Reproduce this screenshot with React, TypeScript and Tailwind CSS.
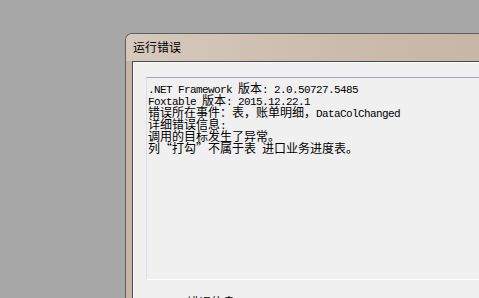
import React from 'react';

const lines = [
  '.NET Framework 版本: 2.0.50727.5485',
  'Foxtable 版本: 2015.12.22.1',
  '错误所在事件：表，账单明细，DataColChanged',
  '详细错误信息:',
  '调用的目标发生了异常。',
  '列“打勾”不属于表 进口业务进度表。',
];

// ascii runs get the narrow mono face, everything else the CJK face
const Line: React.FC<{ text: string }> = ({ text }) => {
  const parts = text.split(/([\x20-\x7E]+)/).filter((p) => p.length > 0);
  return (
    <div className="h-[12px] leading-[12px] whitespace-pre">
      {parts.map((p, i) =>
        /^[\x20-\x7E]+$/.test(p) ? (
          <span
            key={i}
            className="font-['Liberation_Mono',monospace] text-[11px] tracking-[-0.6px]"
          >
            {p}
          </span>
        ) : (
          <span key={i} className="font-['Noto_Sans_CJK_SC',sans-serif] text-[12px]">
            {p}
          </span>
        )
      )}
    </div>
  );
};

export default function App() {
  return (
    <div className="w-[479px] h-[298px] overflow-hidden bg-[#a7a7a7] pl-[125px] pt-[33px]">
      {/* dialog window */}
      <div className="w-[400px] h-[300px] rounded-tl-[7px] border-t border-l border-[#5e5e5e] bg-[#c8b6a5] flex flex-col">
        <div className="h-[27px] shrink-0 rounded-tl-[6px] bg-gradient-to-r from-[#d5c9bd] via-[#ccbcad] to-[#c6b4a3] pl-[7px] pt-[7px]">
          <span className="font-['Noto_Sans_CJK_SC',sans-serif] text-[12px] leading-[12px] text-black block">
            运行错误
          </span>
        </div>
        <div className="flex-1 flex pl-[6px]">
          <div className="flex-1 border-t border-l border-[#4a4a4a] bg-[#f0f0f0]">
            <div className="h-full border-t border-l border-[#fafafa] pt-[14px] pl-[12px]">
              {/* read-only text box */}
              <div className="h-[203px] border-t border-l border-t-[#a9a9b8] border-l-[#dcdce6] border-b border-b-[#ffffff] pt-[3px] pl-[1px] text-black">
                {lines.map((l, i) => (
                  <Line key={i} text={l} />
                ))}
              </div>
              <div className="pl-[41px] pt-[16px] font-['Noto_Sans_CJK_SC',sans-serif] text-[12px] leading-[12px] text-black">
                错误信息
              </div>
            </div>
          </div>
        </div>
      </div>
    </div>
  );
}
